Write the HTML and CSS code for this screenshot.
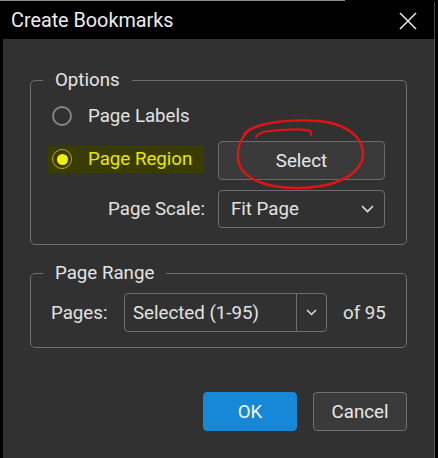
FILE: index.html
```html
<!DOCTYPE html>
<html>
<head>
<meta charset="utf-8">
<link rel="stylesheet" href="styles.css">
</head>
<body>
<div class="frame">
  <div class="scrap"></div>
  <div class="titlebar">
    <span class="title">Create Bookmarks</span>
    <svg class="close" width="18" height="18" viewBox="0 0 18 18"><path d="M1 1L17 17M17 1L1 17" stroke="#e6e6e6" stroke-width="1.6" fill="none"/></svg>
  </div>
  <div class="client">
    <fieldset class="group">
      <legend>Options</legend>
      <div class="opts">
        <div class="radio-row">
          <span class="radio"></span>
          <span>Page Labels</span>
        </div>
        <div class="hl">
          <span class="radio on"><span class="dot"></span></span>
          <span class="hl-text">Page Region</span>
        </div>
        <div class="btn">Select</div>
        <div class="scale-label">Page Scale:</div>
        <div class="dropdown">
          <span>Fit Page</span>
          <svg width="13" height="8" viewBox="0 0 13 8"><path d="M1 1L6.5 6.5L12 1" stroke="#e0e0e0" stroke-width="1.6" fill="none"/></svg>
        </div>
      </div>
    </fieldset>
    <fieldset class="group range">
      <legend>Page Range</legend>
      <div class="range-row">
        <span class="pages-label">Pages:</span>
        <div class="combo">
          <span class="combo-text">Selected (1-95)</span>
          <span class="combo-arrow"><svg width="11" height="7" viewBox="0 0 11 7"><path d="M1 1L5.5 5.5L10 1" stroke="#e0e0e0" stroke-width="1.5" fill="none"/></svg></span>
        </div>
        <span class="of">of 95</span>
      </div>
    </fieldset>
    <div class="actions">
      <div class="btn ok">OK</div>
      <div class="btn cancel">Cancel</div>
    </div>
  </div>
  <svg class="scribble" width="438" height="458" viewBox="0 0 438 458">
    <path d="M244 134 C 256 122, 290 119, 318 121 C 345 123, 362 136, 363 152 C 364 172, 340 187, 300 188 C 262 189, 239 176, 238 158 C 237 147, 240 139, 248 131" stroke="#e01414" stroke-width="2.4" fill="none" stroke-linecap="round"/>
    <path d="M256 137 C 259 132, 266 131, 280 130 C 295 129, 306 129, 310 131 C 311 132, 311 134, 311 135" stroke="#e01414" stroke-width="2.2" fill="none" stroke-linecap="round"/>
  </svg>
</div>
</body>
</html>
```

FILE: styles.css
```css
* { box-sizing: border-box; }
html, body {
  margin: 0;
  padding: 0;
  background: #000;
}
body {
  width: 438px;
  height: 458px;
  overflow: hidden;
  font-family: Roboto, "Noto Sans", "DejaVu Sans", sans-serif;
  font-size: 18.7px;
  color: #e2e2e2;
}
.frame {
  position: relative;
  width: 438px;
  height: 458px;
  display: flex;
  flex-direction: column;
}
.scrap {
  height: 2px;
  width: 345px;
  border-top: 1px solid #8c8c8c;
}
.titlebar {
  height: 37px;
  display: flex;
  align-items: center;
  justify-content: space-between;
  padding: 0 17px 0 11px;
  border-right: 1px solid #444;
  width: 435px;
}
.title {
  font-size: 19.8px;
  color: #ececec;
}
.close { display: block; }
.client {
  flex: 1;
  margin-left: 3px;
  width: 432px;
  background: #313131;
  border-right: 1px solid #5a5a5a;
  padding: 31px 27px 0 27px;
  display: flex;
  flex-direction: column;
}
.group {
  margin: 0;
  border: 1px solid #6e6e6e;
  border-radius: 5px;
  padding: 11px 21px 16px 17px;
  min-width: 0;
}
.group legend {
  padding: 0 12px;
  margin-left: -5px;
  line-height: 20px;
  color: #e4e4e4;
}
.opts {
  display: grid;
  grid-template-columns: 156px 167px;
  grid-template-rows: 30px 39px 38px;
  column-gap: 14px;
  row-gap: 10px;
}
.radio-row {
  grid-column: 1 / -1;
  display: flex;
  align-items: center;
  gap: 16px;
  padding-left: 4px;
}
.radio {
  width: 20px;
  height: 20px;
  border-radius: 50%;
  border: 2px solid #858585;
  display: flex;
  align-items: center;
  justify-content: center;
  flex: none;
}
.radio.on {
  border: 1.5px solid #b5b500;
}
.dot {
  width: 11px;
  height: 11px;
  border-radius: 50%;
  background: #f2f200;
}
.hl {
  align-self: center;
  height: 27px;
  background: #3b3b04;
  display: flex;
  align-items: center;
  gap: 16px;
  padding-left: 4px;
  margin-top: -3px;
}
.hl-text { color: #e8e800; }
.btn {
  display: flex;
  align-items: center;
  justify-content: center;
  border: 1px solid #6a6a6a;
  border-radius: 4px;
  background: #3a3a3a;
  color: #e8e8e8;
}
.scale-label {
  justify-self: end;
  align-self: center;
  margin-right: -1px;
}
.dropdown {
  display: flex;
  align-items: center;
  justify-content: space-between;
  border: 1px solid #6e6e6e;
  border-radius: 4px;
  padding: 0 10px 0 12px;
}
.range {
  margin-top: 18px;
  padding: 10px 20px 15px 20px;
}
.range legend { margin-left: -8px; }
.range-row {
  display: flex;
  align-items: center;
  height: 39px;
}
.pages-label { width: 73px; }
.combo {
  width: 203px;
  height: 39px;
  display: flex;
  border: 1px solid #6e6e6e;
  border-radius: 4px;
}
.combo-text {
  flex: 1;
  display: flex;
  align-items: center;
  padding-left: 8px;
}
.combo-arrow {
  width: 30px;
  border-left: 1px solid #6e6e6e;
  display: flex;
  align-items: center;
  justify-content: center;
}
.of { margin-left: 16px; }
.actions {
  margin-top: 44px;
  display: flex;
  justify-content: flex-end;
  gap: 16px;
}
.actions .btn {
  width: 94px;
  height: 39px;
}
.ok {
  background: #1787d8;
  border-color: #1787d8;
  color: #f4f8fc;
}
.cancel {
  border-color: #727272;
}
.scribble {
  position: absolute;
  left: 0;
  top: 0;
  pointer-events: none;
}
```
